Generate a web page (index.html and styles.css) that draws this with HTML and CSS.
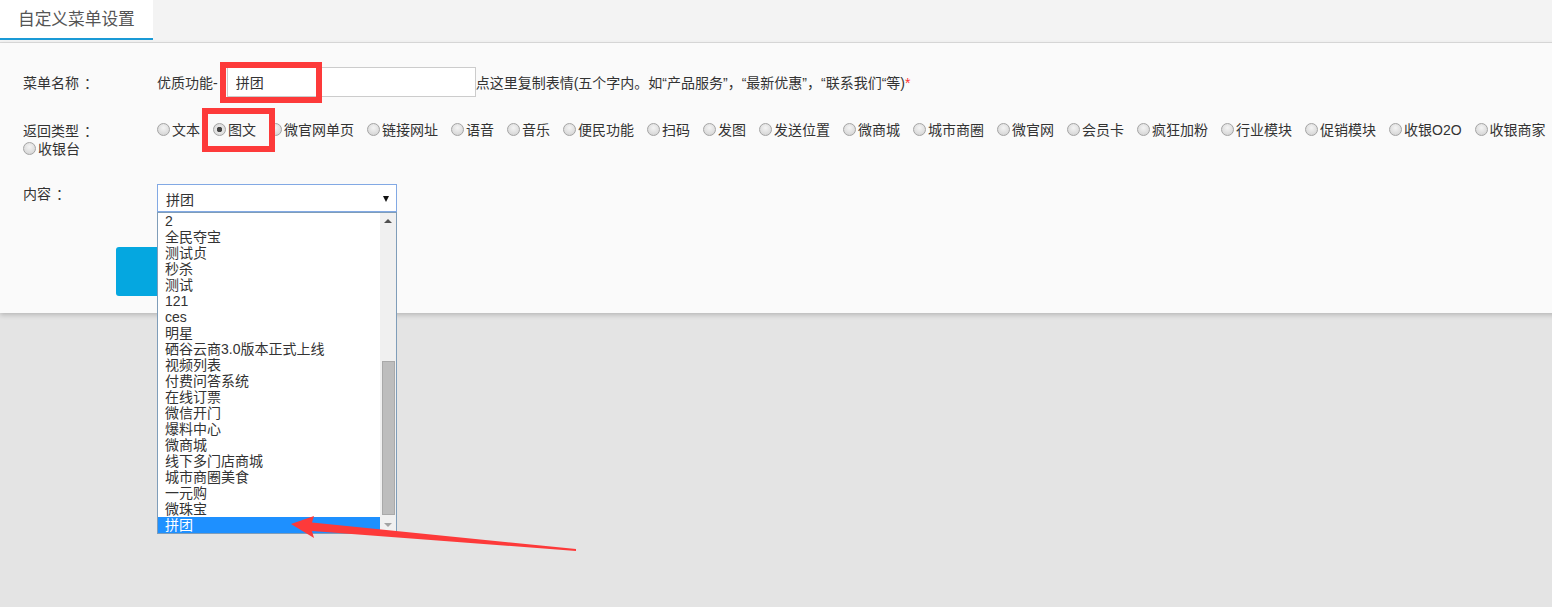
FILE: index.html
```html
<!DOCTYPE html>
<html lang="zh-CN">
<head>
  <meta charset="UTF-8">
  <title>自定义菜单设置</title>
  <link rel="stylesheet" href="styles.css">
</head>
<body>
  <div class="page">
    <!-- tab bar -->
    <div class="tabs">
      <div class="tab active">自定义菜单设置</div>
    </div>

    <div class="panel">
      <!-- menu name -->
      <div class="row row-name">
        <span class="label">菜单名称<b class="colon">：</b></span>
        <span class="prefix">优质功能-</span>
        <input class="name-input" type="text" value="拼团">
        <span class="hint">点这里复制表情(五个字内。如“产品服务”，“最新优惠”，“联系我们“等)<em>*</em></span>
      </div>

      <!-- reply type -->
      <div class="row row-type">
        <span class="label">返回类型<b class="colon">：</b></span>
        <label class="opt"><input type="radio" name="type">文本</label>
        <label class="opt"><input type="radio" name="type" checked>图文</label>
        <label class="opt"><input type="radio" name="type">微官网单页</label>
        <label class="opt"><input type="radio" name="type">链接网址</label>
        <label class="opt"><input type="radio" name="type">语音</label>
        <label class="opt"><input type="radio" name="type">音乐</label>
        <label class="opt"><input type="radio" name="type">便民功能</label>
        <label class="opt"><input type="radio" name="type">扫码</label>
        <label class="opt"><input type="radio" name="type">发图</label>
        <label class="opt"><input type="radio" name="type">发送位置</label>
        <label class="opt"><input type="radio" name="type">微商城</label>
        <label class="opt"><input type="radio" name="type">城市商圈</label>
        <label class="opt"><input type="radio" name="type">微官网</label>
        <label class="opt"><input type="radio" name="type">会员卡</label>
        <label class="opt"><input type="radio" name="type">疯狂加粉</label>
        <label class="opt"><input type="radio" name="type">行业模块</label>
        <label class="opt"><input type="radio" name="type">促销模块</label>
        <label class="opt"><input type="radio" name="type">收银O2O</label>
        <label class="opt"><input type="radio" name="type">收银商家</label>
        <label class="opt"><input type="radio" name="type">收银台</label>
      </div>

      <!-- content select (opened) -->
      <div class="row row-content">
        <span class="label">内容<b class="colon">：</b></span>
        <div class="select-wrap">
          <div class="select">拼团<i class="caret"></i></div>
          <div class="listbox">
            <ul class="items">
              <li>2</li>
              <li>全民夺宝</li>
              <li>测试贞</li>
              <li>秒杀</li>
              <li>测试</li>
              <li>121</li>
              <li>ces</li>
              <li>明星</li>
              <li>硒谷云商3.0版本正式上线</li>
              <li>视频列表</li>
              <li>付费问答系统</li>
              <li>在线订票</li>
              <li>微信开门</li>
              <li>爆料中心</li>
              <li>微商城</li>
              <li>线下多门店商城</li>
              <li>城市商圈美食</li>
              <li>一元购</li>
              <li>微珠宝</li>
              <li class="selected">拼团</li>
            </ul>
            <div class="scrollbar">
              <div class="sb-btn"><i class="sb-up"></i></div>
              <div class="sb-gap"></div>
              <div class="sb-thumb"></div>
              <div class="sb-rest"></div>
              <div class="sb-btn"><i class="sb-down"></i></div>
            </div>
          </div>
        </div>
      </div>

      <div class="row row-submit">
        <button class="btn" type="button"></button>
      </div>
    </div>
  </div>

  <!-- annotations drawn over the screenshot -->
  <svg class="marks" width="1552" height="607" viewBox="0 0 1552 607">
    <rect x="223" y="65" width="96" height="35" fill="none" stroke="#fd3a3a" stroke-width="6"/>
    <rect x="205" y="111" width="67" height="38" fill="none" stroke="#fd3a3a" stroke-width="6"/>
    <polygon points="291,524 314,516 312,522.5 576,549 576,551 312,531 314,538" fill="#fd3a3a"/>
  </svg>
</body>
</html>
```

FILE: styles.css
```css
html {
  overflow: hidden;
}
body {
  margin: 0;
  font-family: "Liberation Sans", "Noto Sans CJK SC", sans-serif;
  font-size: 14px;
  color: #333;
  background-color: #e4e4e4;
}
.page {
  width: 1600px;
  min-height: 100vh;
}
.tabs {
  display: flex;
  height: 42px;
  background-color: #f3f3f3;
  border-bottom: 1px solid #dcdcdc;
}
.tab {
  height: 40px;
  line-height: 40px;
  padding-left: 18px;
  font-size: 16.7px;
  color: #555;
  white-space: nowrap;
}
.tab.active {
  width: 153px;
  box-sizing: border-box;
  background-color: #fff;
  border-bottom: 2px solid #1a9ad6;
}
.panel {
  background-color: #fafafa;
  padding: 24px 0 17px 23px;
  box-shadow: 0 2px 5px rgba(0, 0, 0, 0.2);
}
.row {
  display: flex;
}
.label {
  width: 134px;
  flex-shrink: 0;
  line-height: 19px;
  font-family: "Noto Sans CJK SC", sans-serif;
}
.colon {
  font-weight: normal;
  margin-left: 5px;
}
.row-name {
  align-items: center;
  height: 30px;
}
.name-input {
  width: 249px;
  height: 30px;
  box-sizing: border-box;
  margin: 0 0 0 9px;
  padding: 0 8px;
  border: 1px solid #ccc;
  background: #fff;
  font: inherit;
  color: #333;
  outline: none;
}
.hint em {
  font-style: normal;
  color: #f33;
}
.row-type {
  flex-wrap: wrap;
  margin-top: 24px;
  line-height: 19px;
}
.opt {
  display: flex;
  align-items: center;
  margin-right: 13px;
  white-space: nowrap;
}
.opt input {
  appearance: none;
  -webkit-appearance: none;
  width: 13px;
  height: 13px;
  margin: 0 2px 3px 0;
  border: 1px solid #a4a4a4;
  border-radius: 50%;
  box-sizing: border-box;
  background: radial-gradient(circle at 50% 35%, #f4f4f4 0%, #dadada 70%, #cfcfcf 100%);
}
.opt input:checked {
  background: radial-gradient(circle, #444 0, #444 2.5px, #e6e6e6 3px, #d4d4d4 100%);
}
.row-content {
  margin-top: 25px;
  align-items: flex-start;
}
.select-wrap {
  position: relative;
  width: 240px;
}
.select {
  display: flex;
  align-items: center;
  justify-content: space-between;
  height: 28px;
  box-sizing: border-box;
  padding: 2px 7px 0 8px;
  border: 1px solid #82a9e4;
  background: #fff;
}
.caret {
  width: 0;
  height: 0;
  border-left: 3.5px solid transparent;
  border-right: 3.5px solid transparent;
  border-top: 6px solid #111;
}
.listbox {
  position: absolute;
  top: 28px;
  left: 0;
  width: 240px;
  height: 322px;
  box-sizing: border-box;
  display: flex;
  border: 1px solid #7f9db9;
  background: #fff;
  z-index: 2;
}
.items {
  flex: 1;
  margin: 0;
  padding: 0;
  list-style: none;
}
.items li {
  height: 16px;
  line-height: 16px;
  padding-left: 7px;
  white-space: nowrap;
}
.items li.selected {
  background-color: #1e90ff;
  color: #fff;
}
.scrollbar {
  width: 16px;
  display: flex;
  flex-direction: column;
  background-color: #f0f0f0;
}
.sb-btn {
  height: 16px;
  display: flex;
  align-items: center;
  justify-content: center;
}
.sb-up, .sb-down {
  width: 0;
  height: 0;
  border-left: 4px solid transparent;
  border-right: 4px solid transparent;
}
.sb-up {
  border-bottom: 4px solid #505050;
}
.sb-down {
  border-top: 4px solid #a3a3a3;
}
.sb-gap {
  height: 132px;
}
.sb-thumb {
  height: 154px;
  margin: 0 1px 0 2px;
  box-sizing: border-box;
  background-color: #bdbdbd;
  border: 1px solid #a9a9a9;
}
.sb-rest {
  height: 2px;
}
.row-submit {
  margin-top: 35px;
  padding-left: 93px;
}
.btn {
  width: 120px;
  height: 49px;
  border: none;
  border-radius: 3px;
  background-color: #05a7e0;
}
.marks {
  position: absolute;
  top: 0;
  left: 0;
  z-index: 3;
  pointer-events: none;
}
```
